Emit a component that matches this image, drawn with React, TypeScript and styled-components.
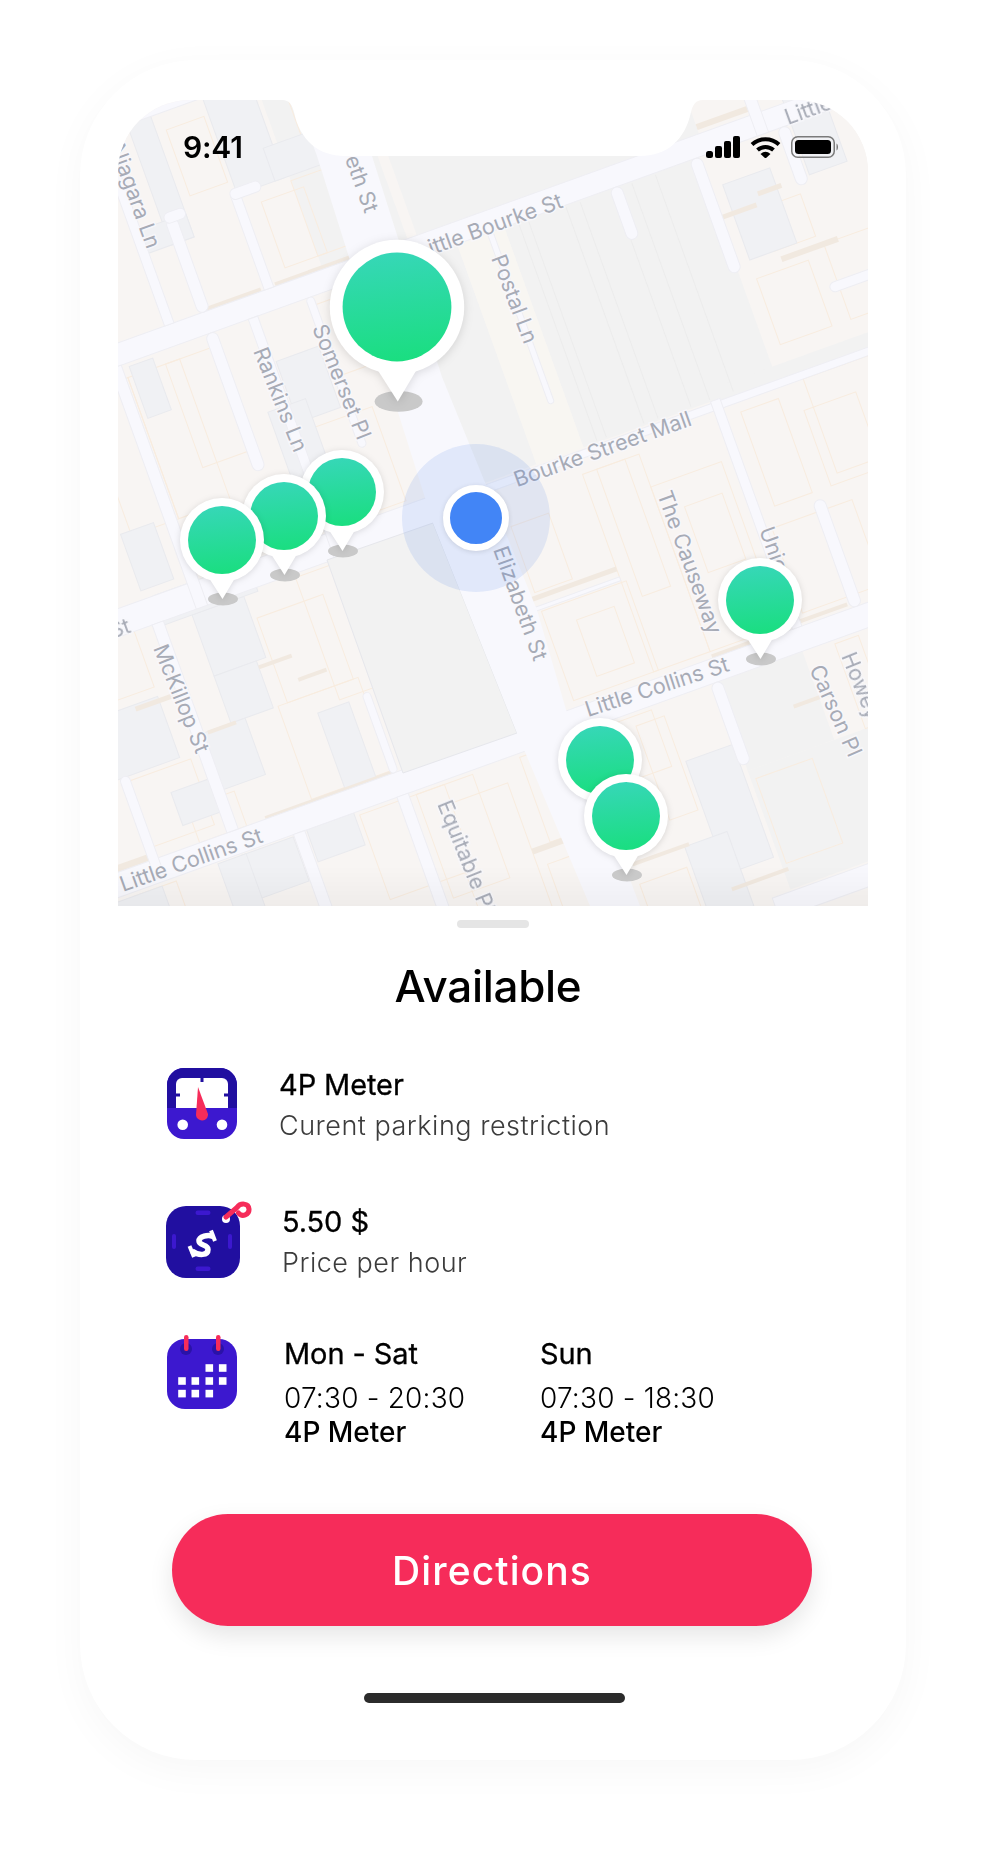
import React from "react";
import styled, { createGlobalStyle } from "styled-components";

const Global = createGlobalStyle`
  html, body { margin: 0; padding: 0; background: #fff; }
  body { font-family: Inter, "Liberation Sans", sans-serif; }
`;

const Page = styled.div`
  width: 986px;
  height: 1860px;
  padding: 60px 0 0 80px;
  box-sizing: border-box;
  overflow: hidden;
`;

const Phone = styled.div`
  width: 826px;
  height: 1700px;
  box-sizing: border-box;
  padding: 40px 38px 0;
  background: #fff;
  border-radius: 116px;
  box-shadow: 0 10px 40px rgba(0, 0, 0, 0.035);
  display: flex;
  flex-direction: column;
`;

const MapFrame = styled.div`
  position: relative;
  width: 750px;
  height: 806px;
  flex: none;
  overflow: hidden;
  border-radius: 72px 72px 0 0;
`;

const MapSvg = styled.svg`
  display: block;
`;

const Soft = styled.g`
  filter: blur(0.5px);
`;

const StatusBar = styled.div`
  position: absolute;
  top: 0;
  left: 0;
  right: 0;
  display: flex;
  align-items: center;
  justify-content: space-between;
  padding: 36px 29px 0 65px;
  height: 22px;
`;

const Time = styled.span`
  font-size: 30px;
  font-weight: 600;
  line-height: 22px;
  letter-spacing: -0.2px;
  color: #000;
`;

const StatusIcons = styled.div`
  display: flex;
  align-items: center;
  gap: 10px;
  margin-top: -1px;
`;

const PinBox = styled.svg<{ $x: number; $y: number; $scale: number }>`
  position: absolute;
  left: ${(p) => p.$x - 118 - 50 * p.$scale}px;
  top: ${(p) => p.$y - 100 - 50 * p.$scale}px;
  width: ${(p) => 100 * p.$scale}px;
  height: ${(p) => 120 * p.$scale}px;
  overflow: visible;
`;

const Halo = styled.div`
  position: absolute;
  left: ${402 - 118}px;
  top: ${444 - 100}px;
  width: 148px;
  height: 148px;
  border-radius: 50%;
  background: rgba(66, 120, 235, 0.13);
  display: flex;
  align-items: center;
  justify-content: center;
`;

const Dot = styled.div`
  width: 52px;
  height: 52px;
  border: 7px solid #fff;
  border-radius: 50%;
  background: #4285f6;
  box-shadow: 0 1px 5px rgba(0, 0, 0, 0.12);
`;

const Sheet = styled.div`
  flex: 1;
  display: flex;
  flex-direction: column;
  position: relative;
`;

const Grabber = styled.div`
  width: 72px;
  height: 8px;
  margin: 14px auto 0;
  border-radius: 4px;
  background: #e5e5e5;
`;

const Title = styled.h1`
  margin: 28px 0 0;
  padding-right: 10px;
  text-align: center;
  font-size: 44px;
  line-height: 60px;
  font-weight: 500;
  letter-spacing: -0.3px;
  color: #000;
`;

const Row = styled.div<{ $top: number; $gap: number; $left: number }>`
  display: flex;
  align-items: flex-start;
  margin-top: ${(p) => p.$top}px;
  padding-left: ${(p) => p.$left}px;
  gap: ${(p) => p.$gap}px;
`;

const IconSvg = styled.svg`
  display: block;
  flex: none;
`;

const ItemText = styled.div<{ $top: number }>`
  padding-top: ${(p) => p.$top}px;
`;

const ItemTitle = styled.div`
  font-size: 29px;
  line-height: 34px;
  font-weight: 400;
  letter-spacing: -0.1px;
  color: #000;
  -webkit-text-stroke: 0.3px #000;
`;

const ItemSub = styled.div`
  margin-top: 7px;
  font-size: 27px;
  line-height: 34px;
  font-weight: 300;
  letter-spacing: 0.5px;
  color: #3c3c3c;
`;

const HoursGrid = styled.div`
  display: grid;
  grid-template-columns: 256px auto;
`;

const HoursTime = styled.div`
  margin-top: 10px;
  font-size: 28px;
  line-height: 34px;
  font-weight: 300;
  letter-spacing: 0.2px;
  color: #000;
`;

const HoursKind = styled.div`
  font-size: 28px;
  line-height: 34px;
  font-weight: 500;
  color: #000;
`;

const Directions = styled.button`
  display: block;
  width: 640px;
  height: 112px;
  margin: 65px 0 0 54px;
  padding: 0;
  border: 0;
  border-radius: 56px;
  background: #f62c5a;
  color: #fff;
  font-family: inherit;
  font-size: 39px;
  font-weight: 500;
  letter-spacing: 1.1px;
  box-shadow: 0 10px 24px rgba(0, 0, 0, 0.1);
`;

const HomeBar = styled.div`
  width: 261px;
  height: 10px;
  margin: 67px 0 0 246px;
  border-radius: 5px;
  background: #2b2b2b;
`;

const BEIGE = "#f8f5f3";
const PLOT = "#f2f2f2";
const GREY = "#f0f1f4";
const ROAD = "#f8f8fd";
const TAN = "#f1e9e0";
const LINE = "#f8ecdf";

type R = [number, number, number, number];

const plots: R[] = [
  [10, 75, -264, -30],
  [125, 330, -264, -30],
  [40, 340, -500, -286],
  [170, 262, 236, 330],
  [170, 420, 330, 456],
  [270, 700, -42, -28],
  [-60, 30, -500, -286],
];

const greys: R[] = [
  [-115, -65, -520, -385],
  [-195, -170, -500, -360],
  [-75, -25, -420, -385],
  [-225, -170, -385, -360],
  [-275, -250, -260, -205],
  [-135, -90, -215, -150],
  [-160, -120, -170, -90],
  [-340, -305, -105, -45],
  [-300, -245, -5, 60],
  [-300, -255, 60, 110],
  [-430, -360, 60, 125],
  [-335, -285, 110, 170],
  [-215, -182, 130, 215],
  [-380, -340, 155, 190],
  [-335, -280, 238, 285],
  [-265, -215, 236, 270],
  [345, 395, -230, -150],
  [115, 165, 300, 420],
  [85, 130, 380, 470],
  [430, 470, -300, -210],
  [-420, -380, -100, -40],
  [-360, -330, 238, 320],
  [-330, -230, -36, -5],
  [-420, -700, 240, 300],
];

const tans: R[] = [
  [-110, -30, -290, -286],
  [-185, -125, -290, -286],
  [330, 370, -202, -197],
  [375, 400, -212, -207],
  [375, 435, -143, -137],
  [-385, -345, 62, 67],
  [-325, -295, 109, 113],
  [-255, -220, 65, 69],
  [-222, -192, 90, 94],
  [-300, -165, 209, 212],
  [20, 115, 93, 98],
  [175, 215, 208, 212],
  [265, 320, 205, 209],
  [115, 175, 434, 438],
  [30, 90, 377, 381],
  [235, 275, 283, 287],
  [-470, -420, 205, 212],
  [-60, -20, 330, 336],
  [340, 400, -296, -290],
];

const outlines: R[] = [
  [-280, -225, -250, -100],
  [-240, -190, -250, -140],
  [-80, -40, -255, -180],
  [-130, -60, -140, -40],
  [-75, -35, -470, -400],
  [-60, -10, -380, -300],
  [-95, -50, -370, -300],
  [-160, -120, -470, -400],
  [30, 70, 20, 90],
  [30, 120, 110, 205],
  [60, 100, 130, 190],
  [115, 175, -5, 205],
  [130, 160, -5, 130],
  [175, 250, 30, 205],
  [200, 240, 60, 130],
  [285, 325, -10, 90],
  [275, 360, 110, 200],
  [355, 430, -20, 80],
  [345, 400, -130, -60],
  [420, 470, -140, -60],
  [370, 415, -195, -150],
  [-240, -170, 20, 110],
  [-190, -140, -5, 125],
  [-250, -165, 110, 209],
  [-370, -320, 175, 212],
  [-420, -350, 130, 200],
  [-410, -360, -12, 50],
  [-450, -405, 240, 330],
  [-210, -120, 240, 330],
  [-150, -90, 240, 350],
  [-130, -60, 260, 420],
  [-40, 30, 240, 330],
  [-50, 20, 350, 430],
  [60, 100, 240, 300],
  [175, 235, 340, 430],
  [30, 80, 400, 470],
  [295, 320, 240, 330],
  [-330, -280, -250, -100],
  [440, 500, -10, 90],
  [345, 400, 10, 90],
  [80, 110, 250, 350],
];

const roads: (R | [number, number, number, number, number])[] = [
  [-800, -30, -36, -9],
  [10, 800, -28, -20],
  [-800, 800, -286, -264],
  [-800, 800, 212, 236],
  [-800, 800, -500, -488],
  [150, 800, 458, 480],
  [107, 113, -264, -82, 3],
  [237, 249, -264, -209, 6],
  [322, 334, -264, -143, 6],
  [415, 427, -264, -203, 6],
  [394, 406, -500, -264],
  [411, 520, -101, -91, 5],
  [260, 270, -30, 212],
  [322, 334, 99, 212, 6],
  [164, 176, 236, 323, 6],
  [-169, -157, 236, 480],
  [-279, -267, 236, 480],
  [-341, -329, -9, 212],
  [-424, -414, 124, 232, 5],
  [-167, -159, 127, 212, 4],
  [-147, -137, -264, -9],
  [-86, -78, -264, -105, 4],
  [-193, -181, -264, -118, 6],
  [-294, -282, -264, -9],
  [-192, -180, -385, -286, 6],
  [-122, -112, -385, -286],
  [-122, -90, -392, -381, 5],
  [-192, -170, -392, -381, 5],
  [-228, -218, -480, -286],
  [20, 115, 104, 108],
  [-500, -488, 236, 480],
  [-440, -428, -500, -286],
];

const Labels = styled.g`
  font-family: Inter, "Liberation Sans", sans-serif;
  font-size: 21.5px;
  font-weight: 400;
  fill: #a7abb6;
  stroke: rgba(248, 248, 252, 0.85);
  stroke-width: 3px;
  paint-order: stroke;
`;

type L = [string, number, number, number, "start" | "end"];
const labels: L[] = [
  ["Niagara Ln", 147, 250, 70, "end"],
  ["Elizabeth St", 365, 214, 70, "end"],
  ["Elizabeth St", 534, 662, 70, "end"],
  ["Little Bourke St", 564, 207, -20, "end"],
  ["Little Bourke St", 788, 125, -20, "start"],
  ["Postal Ln", 491, 258, 69, "start"],
  ["Bourke Street Mall", 693, 425, -19.5, "end"],
  ["Rankins Ln", 253, 351, 68, "start"],
  ["Somerset Pl", 312, 328, 68, "start"],
  ["McKillop St", 153, 648, 68, "start"],
  ["Little Collins St", 123, 892, -19.5, "start"],
  ["Little Collins St", 588, 717, -18, "start"],
  ["Equitable Pl", 437, 804, 68, "start"],
  ["The Causeway", 657, 494, 70, "start"],
  ["Union", 759, 530, 70, "start"],
  ["Carson Pl", 809, 669, 66, "start"],
  ["Howey Pl", 841, 656, 68, "start"],
  ["Bourke St", 132, 632, -20, "end"],
];

const Rot = ({ r, fill, stroke }: { r: R | [number, number, number, number, number]; fill: string; stroke?: string }) => (
  <rect
    x={Math.min(r[0], r[1])}
    y={r[2]}
    width={Math.abs(r[1] - r[0])}
    height={r[3] - r[2]}
    rx={r[4] ?? 0}
    fill={fill}
    stroke={stroke}
    strokeWidth={stroke ? 1 : undefined}
  />
);

const MapDrawing = () => (
  <MapSvg width={750} height={806} viewBox="118 100 750 806">
    <defs>
      <linearGradient id="mapFade" x1="0" y1="0" x2="0" y2="1">
        <stop offset="0" stopColor="#000" stopOpacity="0" />
        <stop offset="1" stopColor="#000" stopOpacity="0.035" />
      </linearGradient>
    </defs>
    <rect x={118} y={100} width={750} height={806} fill={BEIGE} />
    <Soft>
      <rect x={100} y={90} width={790} height={830} fill={BEIGE} />
      <g transform="translate(476 518) rotate(-19.8)">
        {plots.map((r, i) => (
          <Rot key={i} r={r} fill={PLOT} />
        ))}
        <Rot r={[75, 125, -264, -30]} fill="#f8f6f2" />
        {outlines.map((r, i) => (
          <Rot key={i} r={r} fill="none" stroke={LINE} />
        ))}
        {[140, 150, 190, 205, 240, 260, 285].map((a) => (
          <line key={a} x1={a} x2={a} y1={-262} y2={-32} stroke="#ececec" strokeWidth={1} />
        ))}
        {greys.map((r, i) => (
          <Rot key={i} r={r} fill={GREY} stroke="#e9eaee" />
        ))}
        {tans.map((r, i) => (
          <Rot key={i} r={r} fill={TAN} />
        ))}
        {roads.map((r, i) => (
          <Rot key={i} r={r} fill={ROAD} stroke="#eeeef3" />
        ))}
      </g>
      <polygon points="433,523 517,733 403,773 327,560" fill={PLOT} stroke="#e6e7ec" />
      <polygon
        points="296,100 317,156 433,523 517,733 590,906 640,906 567,713 537,610 442,377 372,156 352,100"
        fill={ROAD}
      />
      <Labels>
        {labels.map(([t, x, y, rot, anchor], i) => (
          <text key={i} x={x} y={y} textAnchor={anchor} transform={`rotate(${rot} ${x} ${y})`}>
            {t}
          </text>
        ))}
      </Labels>
    </Soft>
    <rect x={118} y={866} width={750} height={40} fill="url(#mapFade)" />
    <path
      d="M276 100 H282 C290 100 292 105 294 112 C300 140 318 156 345 156 H640 C667 156 685 140 691 112 C693 105 695 100 703 100 H710 V96 H276 Z"
      fill="#fff"
    />
  </MapSvg>
);

const Pin = ({ x, y, scale = 1 }: { x: number; y: number; scale?: number }) => (
  <PinBox $x={x} $y={y} $scale={scale} viewBox="-50 -50 100 120">
    <defs>
      <linearGradient id="pinGrad" x1="0.45" y1="0" x2="0.55" y2="1">
        <stop offset="0" stopColor="#36d7b7" />
        <stop offset="1" stopColor="#1ade80" />
      </linearGradient>
    </defs>
    <ellipse cx={1} cy={59} rx={15} ry={6.5} fill="#c9c9c9" />
    <g filter="drop-shadow(0 1px 3px rgba(0,0,0,0.13))">
      <circle r={42} fill="#fff" />
      <path d="M-13 38 L0.5 59 L13 38 Z" fill="#fff" />
    </g>
    <circle r={34} fill="url(#pinGrad)" />
  </PinBox>
);

const SignalIcon = () => (
  <IconSvg width={34} height={22} viewBox="0 0 34 22">
    <rect x={0} y={15} width={7} height={7} rx={2.5} />
    <rect x={9} y={10} width={7} height={12} rx={2} />
    <rect x={18} y={5} width={7} height={17} rx={2} />
    <rect x={27} y={0} width={7} height={22} rx={2} />
  </IconSvg>
);

const WifiIcon = () => (
  <IconSvg width={31} height={22} viewBox="0 0 31 22">
    <path d="M2 8.5 A20 20 0 0 1 29 8.5" fill="none" stroke="#000" strokeWidth={4} />
    <path d="M7.5 14 A12 12 0 0 1 23.5 14" fill="none" stroke="#000" strokeWidth={4} />
    <path d="M10.5 18 Q15.5 13.5 20.5 18 L15.5 22.5 Z" />
  </IconSvg>
);

const BatteryIcon = () => (
  <IconSvg width={48} height={22} viewBox="0 0 48 22">
    <rect x={0.75} y={0.75} width={42.5} height={20.5} rx={6} fill="none" stroke="#7a7a7a" strokeWidth={1.5} />
    <rect x={4} y={4} width={36} height={14} rx={3.5} />
    <path d="M45.5 7.5 C47.5 8.5 47.5 13.5 45.5 14.5 Z" fill="#7a7a7a" />
  </IconSvg>
);

const MeterIcon = () => (
  <IconSvg width={70} height={71} viewBox="0 0 70 71">
    <rect width={70} height={71} rx={17} fill="#3c18cf" />
    <path d="M0 40 V17 A17 17 0 0 1 17 0 H53 A17 17 0 0 1 70 17 V40 Z" fill="#210fa0" />
    <path d="M9 40 V16 A6 6 0 0 1 15 10 H55 A6 6 0 0 1 61 16 V40 Z" fill="#fff" />
    <rect x={33.5} y={10} width={3} height={4} fill="#210fa0" />
    <rect x={9} y={25.5} width={4} height={3} fill="#210fa0" />
    <rect x={57} y={25.5} width={4} height={3} fill="#210fa0" />
    <path d="M31 19 L41 46 A6 6 0 1 1 29 47 Z" fill="#f62c5a" />
    <circle cx={15.7} cy={56.7} r={5.3} fill="#fff" />
    <circle cx={55} cy={56.7} r={5.3} fill="#fff" />
  </IconSvg>
);

const PriceIcon = () => (
  <IconSvg width={86} height={78} viewBox="0 0 86 78">
    <rect x={0} y={6} width={74} height={72} rx={20} fill="#210fa0" />
    <rect x={29.5} y={10.5} width={15} height={4.5} rx={2.2} fill="#3c18cf" />
    <rect x={29.5} y={66.5} width={15} height={4.5} rx={2.2} fill="#3c18cf" />
    <rect x={6} y={34} width={4} height={15} rx={2} fill="#3c18cf" />
    <rect x={62} y={34} width={4} height={15} rx={2} fill="#3c18cf" />
    <path
      d="M47 36.5 C42 34 33 36.5 33 41 C33 46 42 44 42 49.5 C42 55.5 33 56 26 51"
      fill="none"
      stroke="#fff"
      strokeWidth={5.5}
    />
    <path d="M45 30.5 L49 41" stroke="#fff" strokeWidth={4} />
    <path d="M23.5 46 L28 57" stroke="#fff" strokeWidth={4} />
    <circle cx={60} cy={19} r={4} fill="#fff" />
    <path
      d="M60 17 L71 7.5 C74.5 2.5 82.5 3 83 9 C83.5 15 76 17.5 72.5 13"
      fill="none"
      stroke="#f62c5a"
      strokeWidth={5}
      strokeLinecap="round"
    />
  </IconSvg>
);

const CalendarIcon = () => (
  <IconSvg width={70} height={74} viewBox="0 0 70 74">
    <rect x={0} y={4} width={70} height={70} rx={18} fill="#3c18cf" />
    <circle cx={19} cy={14} r={6} fill="#2a12a8" />
    <circle cx={51} cy={14} r={6} fill="#2a12a8" />
    <rect x={17} y={0} width={4.5} height={16} rx={2.2} fill="#f62c5a" />
    <rect x={49} y={0} width={4.5} height={16} rx={2.2} fill="#f62c5a" />
    {[
      [42.3, 33],
      [55.7, 33],
      [15, 46],
      [28.3, 46],
      [42.3, 46],
      [55.7, 46],
      [15, 58.6],
      [28.3, 58.6],
      [42.3, 58.6],
    ].map(([x, y]) => (
      <rect key={`${x}-${y}`} x={x - 3.8} y={y - 3.8} width={7.6} height={7.6} fill="#fff" />
    ))}
  </IconSvg>
);

export default function App() {
  return (
    <Page>
      <Global />
      <Phone>
        <MapFrame>
          <MapDrawing />
          <StatusBar>
            <Time>9:41</Time>
            <StatusIcons>
              <SignalIcon />
              <WifiIcon />
              <BatteryIcon />
            </StatusIcons>
          </StatusBar>
          <Pin x={397} y={307} scale={1.6} />
          <Pin x={342} y={492} />
          <Pin x={284} y={516} />
          <Pin x={222} y={540} />
          <Halo>
            <Dot />
          </Halo>
          <Pin x={760} y={600} />
          <Pin x={600} y={760} />
          <Pin x={626} y={816} />
        </MapFrame>
        <Sheet>
          <Grabber />
          <Title>Available</Title>
          <Row $top={52} $left={49} $gap={42}>
            <MeterIcon />
            <ItemText $top={0}>
              <ItemTitle>4P Meter</ItemTitle>
              <ItemSub>Curent parking restriction</ItemSub>
            </ItemText>
          </Row>
          <Row $top={57} $left={48} $gap={30}>
            <PriceIcon />
            <ItemText $top={5}>
              <ItemTitle>5.50 $</ItemTitle>
              <ItemSub>Price per hour</ItemSub>
            </ItemText>
          </Row>
          <Row $top={55} $left={49} $gap={47}>
            <CalendarIcon />
            <ItemText $top={2}>
              <HoursGrid>
                <div>
                  <ItemTitle>Mon - Sat</ItemTitle>
                  <HoursTime>07:30 - 20:30</HoursTime>
                  <HoursKind>4P Meter</HoursKind>
                </div>
                <div>
                  <ItemTitle>Sun</ItemTitle>
                  <HoursTime>07:30 - 18:30</HoursTime>
                  <HoursKind>4P Meter</HoursKind>
                </div>
              </HoursGrid>
            </ItemText>
          </Row>
          <Directions>Directions</Directions>
          <HomeBar />
        </Sheet>
      </Phone>
    </Page>
  );
}
